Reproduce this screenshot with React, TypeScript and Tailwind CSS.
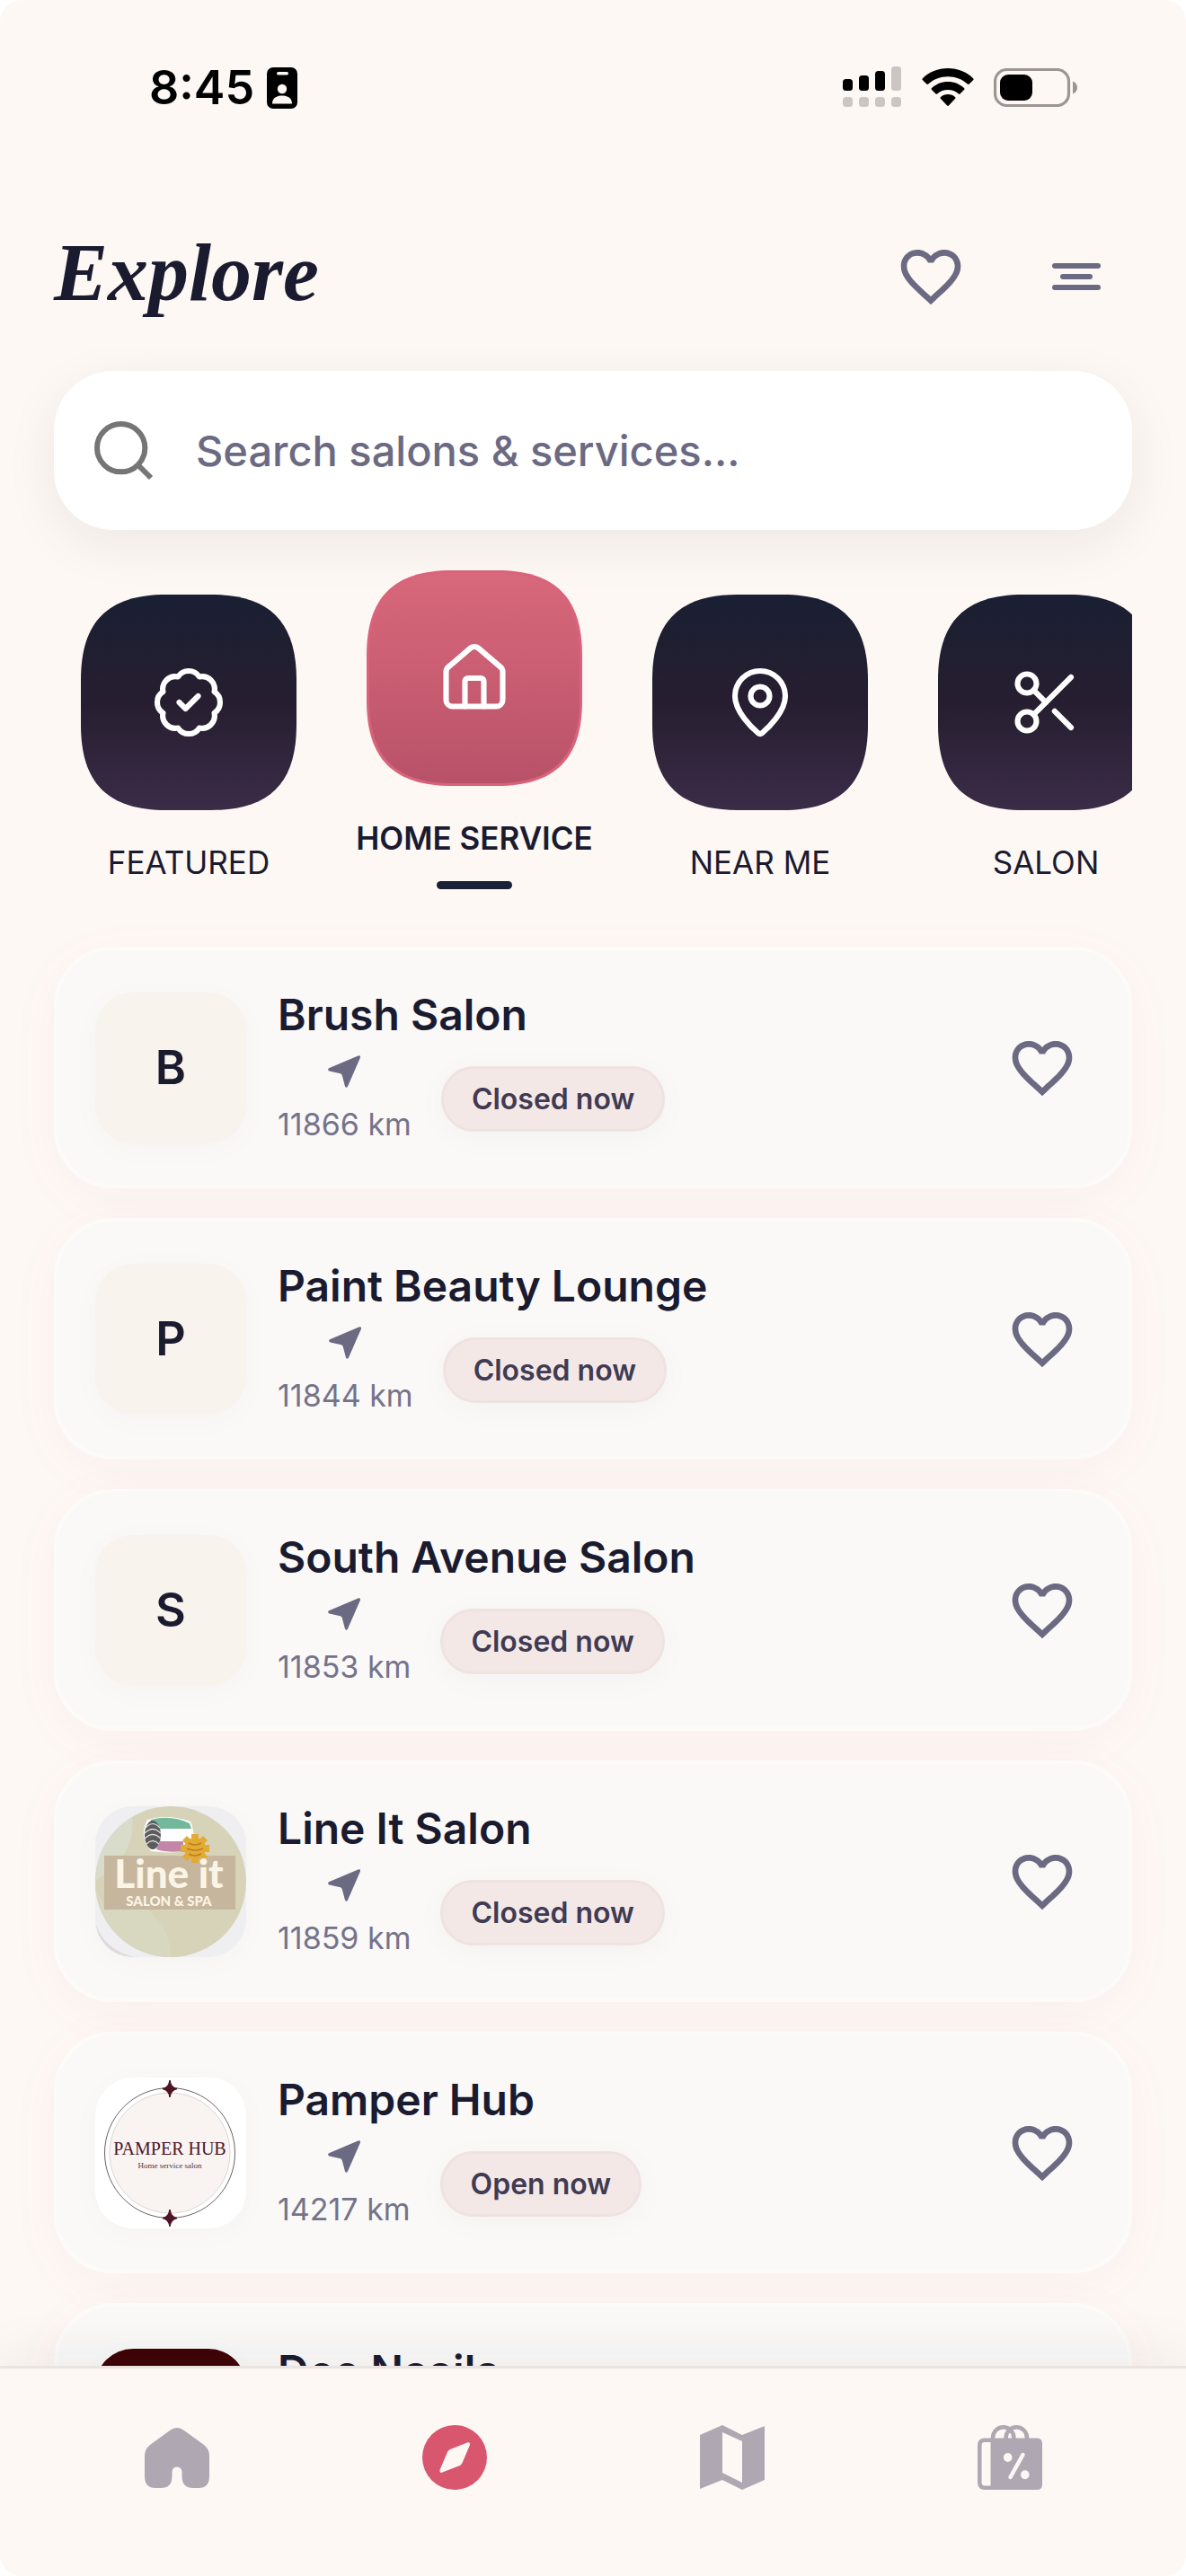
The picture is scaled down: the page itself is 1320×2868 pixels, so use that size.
import { useState } from "react";
import type { ComponentType, ReactNode } from "react";
import { BadgeCheck, House, MapPin, Scissors, Search } from "lucide-react";
import type { LucideProps } from "lucide-react";
import { MdFavoriteBorder } from "react-icons/md";

type Category = {
	id: string;
	label: string;
	icon: ComponentType<LucideProps>;
};

type Salon = {
	name: string;
	distance: string;
	isOpen: boolean;
	logo: ReactNode;
};

const categories: Category[] = [
	{ id: "featured", label: "FEATURED", icon: BadgeCheck },
	{ id: "home-service", label: "HOME SERVICE", icon: House },
	{ id: "near-me", label: "NEAR ME", icon: MapPin },
	{ id: "salon", label: "SALON", icon: Scissors },
];

const salons: Salon[] = [
	{ name: "Brush Salon", distance: "11866 km", isOpen: false, logo: <InitialLogo letter="B" /> },
	{ name: "Paint Beauty Lounge", distance: "11844 km", isOpen: false, logo: <InitialLogo letter="P" /> },
	{ name: "South Avenue Salon", distance: "11853 km", isOpen: false, logo: <InitialLogo letter="S" /> },
	{ name: "Line It Salon", distance: "11859 km", isOpen: false, logo: <LineItLogo /> },
	{ name: "Pamper Hub", distance: "14217 km", isOpen: true, logo: <PamperHubLogo /> },
	{ name: "Dee Naails", distance: "11860 km", isOpen: false, logo: <div className="size-full bg-[#3f0306]" /> },
];

export default function App() {
	const [selected, setSelected] = useState("home-service");

	return (
		<div className="h-screen bg-white">
			<div className="flex h-full flex-col overflow-hidden rounded-[24px] bg-[#fef8f4] font-[Inter,sans-serif] text-[#1b1b30]">
				<StatusBar />
				<header className="mt-24 flex h-40 shrink-0 items-center justify-between pr-[90px] pl-[60px]">
					<h1 className="pb-1 font-['Liberation_Serif',serif] text-[90px] leading-[100px] font-bold italic">Explore</h1>
					<div className="flex items-center gap-[90px] pt-1 text-[#6c6a82]">
						<button type="button" aria-label="Favourites">
							<MdFavoriteBorder className="size-20" />
						</button>
						<button type="button" aria-label="Menu" className="flex size-16 flex-col items-center justify-center gap-1.5">
							<span className="h-1.5 w-[54px] rounded-full bg-current" />
							<span className="h-1.5 w-9 rounded-full bg-current" />
							<span className="h-1.5 w-[54px] rounded-full bg-current" />
						</button>
					</div>
				</header>

				<main className="flex min-h-0 flex-1 flex-col overflow-hidden px-[60px] pt-[27px]">
					<label className="flex h-[177px] shrink-0 items-center rounded-[66px] bg-white pr-10 pl-[38px] shadow-[0_16px_60px_rgba(27,27,48,0.07)]">
						<Search className="size-20 shrink-0 text-[#757575]" strokeWidth={1.8} strokeLinecap="butt" />
						<input
							type="text"
							aria-label="Search salons and services"
							placeholder="Search salons & services..."
							className="ml-10 min-w-0 flex-1 bg-transparent text-[47px] leading-[60px] font-medium outline-none placeholder:text-[#6c6a82]"
						/>
					</label>

					<nav aria-label="Categories" className="flex shrink-0 gap-[18px] overflow-hidden pt-[45px] pb-16">
						{categories.map((category) => (
							<CategoryTile
								key={category.id}
								category={category}
								active={category.id === selected}
								onSelect={() => setSelected(category.id)}
							/>
						))}
					</nav>

					<ul className="flex flex-col gap-[33px]">
						{salons.map((salon) => (
							<SalonCard key={salon.name} salon={salon} />
						))}
					</ul>
				</main>

				<BottomNav />
			</div>
		</div>
	);
}

function StatusBar() {
	return (
		<div className="flex h-[130px] shrink-0 items-end justify-between pr-[120px] pb-1.5 pl-[166px] text-black">
			<div className="flex items-center gap-3.5">
				<span className="text-[52px] leading-[52px] font-semibold">8:45</span>
				<svg viewBox="0 0 34 46" className="h-[46px] w-[34px]">
					<rect width="34" height="46" rx="7" fill="#000" />
					<rect x="11" y="5" width="13" height="3.5" rx="1.7" fill="#fef8f4" />
					<circle cx="17" cy="24" r="5.2" fill="#fef8f4" />
					<path d="M6 40.5C6 34 11 31.5 17 31.5S28 34 28 40.5Z" fill="#fef8f4" />
				</svg>
			</div>
			<div className="flex items-center gap-[22px] pb-1">
				<svg viewBox="0 0 66 46" className="h-[46px] w-[66px]">
					<g fill="#000">
						<rect y="14" width="11" height="13" rx="3.5" />
						<rect x="18" y="10" width="11" height="17" rx="3.5" />
						<rect x="36" y="5" width="11" height="22" rx="3.5" />
					</g>
					<g fill="#cbc6c4">
						<rect x="54" width="11" height="27" rx="3.5" />
						<rect y="34" width="11" height="11" rx="3.5" />
						<rect x="18" y="34" width="11" height="11" rx="3.5" />
						<rect x="36" y="34" width="11" height="11" rx="3.5" />
						<rect x="54" y="34" width="11" height="11" rx="3.5" />
					</g>
				</svg>
				<svg viewBox="0 0 58 43" className="h-[43px] w-[58px]">
					<path d="M29 0C40 0 50 4 57.3 11.4Q58 12.3 57.3 13.1L52.5 17.7Q51.7 18.3 50.8 17.6C45 12.2 37.5 9.3 29 9.3S13 12.2 7.2 17.6Q6.3 18.3 5.5 17.7L.7 13.1Q0 12.3.7 11.4C8 4 18 0 29 0Z" />
					<path d="M29 15C36 15 42.4 17.6 47.2 22.2Q48 23 47.2 23.8L42.5 28.4Q41.7 29 40.9 28.4C37.5 25.5 33.5 24 29 24S20.5 25.5 17.1 28.4Q16.3 29 15.5 28.4L10.8 23.8Q10 23 10.8 22.2C15.6 17.6 22 15 29 15Z" />
					<path d="M29 29C32.2 29 35 30.2 37.2 32.2Q37.9 33 37.2 33.8L29.9 41.6Q29 42.4 28.1 41.6L20.8 33.8Q20.1 33 20.8 32.2C23 30.2 25.8 29 29 29Z" />
				</svg>
				<svg viewBox="0 0 94 43" className="h-[43px] w-[94px]">
					<rect x="1.5" y="1.5" width="82" height="40" rx="13" fill="none" stroke="#9b9593" strokeWidth="3.2" />
					<rect x="7" y="7" width="36" height="29" rx="9" />
					<path d="M88 14.5C91.5 16 93 18.5 93 21.5S91.5 27 88 28.5Z" fill="#9b9593" />
				</svg>
			</div>
		</div>
	);
}

function CategoryTile({ category, active, onSelect }: { category: Category; active: boolean; onSelect: () => void }) {
	const Icon = category.icon;
	const squircle = "M145 0C210 0 240 30 240 95V145C240 210 210 240 145 240H95C30 240 0 210 0 145V95C0 30 30 0 95 0Z";

	return (
		<button
			type="button"
			aria-pressed={active}
			onClick={onSelect}
			className={`flex w-[300px] shrink-0 flex-col items-center ${active ? "" : "pt-[27px]"}`}
		>
			<span className="relative flex size-60 items-center justify-center">
				<svg viewBox="0 0 240 240" className="absolute inset-0 size-full">
					<defs>
						<linearGradient id={`fill-${category.id}`} x1="0" y1="0" x2="0" y2="1">
							<stop offset="0" stopColor={active ? "#d8687b" : "#1a1f33"} />
							<stop offset={active ? "0.5" : "0.5"} stopColor={active ? "#c95d72" : "#261e30"} />
							<stop offset="1" stopColor={active ? "#b85269" : "#3b2c48"} />
						</linearGradient>
					</defs>
					{active && <path d={squircle} fill="#d9637a" />}
					<path
						d={squircle}
						fill={`url(#fill-${category.id})`}
						transform={active ? "translate(3 3) scale(.975)" : undefined}
					/>
				</svg>
				<Icon className="relative size-[84px] text-white" strokeWidth={1.75} />
			</span>
			<span className={`mt-9 text-[35px] leading-[44px] whitespace-nowrap ${active ? "font-semibold" : "font-normal"}`}>
				{category.label}
			</span>
			{active && <span className="mt-[26px] h-[9px] w-[84px] rounded-full bg-[#1a2035]" />}
		</button>
	);
}

function SalonCard({ salon }: { salon: Salon }) {
	return (
		<li className="flex h-[269px] shrink-0 items-center rounded-[66px] border-4 border-[#fdfbfa] bg-[#faf9f8] pr-14 pl-[42px] shadow-[0_12px_60px_rgba(150,50,70,0.04)]">
			<div className="size-[168px] shrink-0 overflow-hidden rounded-[42px] shadow-[0_6px_36px_rgba(27,27,48,0.025)]">{salon.logo}</div>
			<div className="ml-[35px] min-w-0 flex-1">
				<h2 className="truncate text-[48px] leading-[62px] font-semibold">{salon.name}</h2>
				<div className="mt-2 flex items-center gap-[33px]">
					<p className="flex flex-col items-center text-[34px] leading-[54px] text-[#75738a]">
						<span className="flex h-14 items-start pt-1.5">
							<svg viewBox="0 0 36 36" className="size-9" fill="#6c6a82">
								<path d="M33.5.5Q36.5-.5 36 2.5L22 34.5Q20.5 37 19 34.5L15.8 22.5Q15.4 20.8 13.8 20.3L1.5 17.5Q-1 16 1 14.3Z" />
							</svg>
						</span>
						{salon.distance}
					</p>
					<span className="flex h-[73px] items-center rounded-full border-3 border-[#efe3e2] bg-[#f4e8e7] px-[31px] text-[32px] leading-10 font-semibold text-[#403b52] shadow-[0_6px_36px_rgba(27,27,48,0.03)]">
						{salon.isOpen ? "Open now" : "Closed now"}
					</span>
				</div>
			</div>
			<button type="button" aria-label={`Save ${salon.name}`} className="text-[#6c6a82]">
				<MdFavoriteBorder className="size-20" />
			</button>
		</li>
	);
}

function InitialLogo({ letter }: { letter: string }) {
	return (
		<div className="flex size-full items-center justify-center bg-[#f8f3ec] text-[52px] leading-[60px] font-semibold">{letter}</div>
	);
}

function LineItLogo() {
	return (
		<svg viewBox="0 0 168 168" className="size-full" role="img" aria-label="Line It Salon logo">
			<rect width="168" height="168" fill="#efeef0" />
			<path d="M0 130Q10 160 44 168H0Z" fill="#dddbdb" />
			<circle cx="84" cy="84" r="84" fill="#d6d3b8" />
			<path d="M41 12Q46 50 10 76L0 84A84 84 0 0 1 41 12Z" fill="#d9dbcb" />
			<path d="M0 90L11 114H56Q84 134 84 168A84 84 0 0 1 0 90Z" fill="#d8d7c0" />
			<path d="M58 15Q80 8 106 17Q112 30 108 47Q90 54 62 50Q48 34 58 15Z" fill="#fff" />
			<path d="M62 15Q84 9 105 19L107 25H72Q70 18 62 17Z" fill="#74b89b" />
			<ellipse cx="64" cy="32" rx="9" ry="16" fill="#5c5c5f" />
			<path d="M56 24q8-9 16 0M55 30q9-9 18 0M55 36q9-9 18 0M57 42q7-7 14 0" fill="none" stroke="#d9d9d9" strokeWidth="1.2" />
			<path d="M72 39H98V50Q80 52 68 48Z" fill="#c486a8" />
			<rect x="10" y="55" width="146" height="60" fill="#c6b69e" />
			<g fill="#e3aa34">
				<circle cx="111" cy="47" r="12" />
				<path d="M107 31h8v32h-8zM95 43h32v8H95zM97 38l5-5L125 56l-5 5zM120 33l5 5L102 61l-5-5z" />
			</g>
			<path d="M104 41q7 4 14 0M102 47q9 4 18 0M104 53q7 4 14 0" fill="none" stroke="#b97f1d" strokeWidth="1.5" />
			<text x="82" y="91" textAnchor="middle" fontFamily="Lato" fontWeight="900" fontSize="44" fill="#fbf5e6">Line it</text>
			<text x="82" y="111" textAnchor="middle" fontFamily="Lato" fontWeight="900" fontSize="15" fill="#fbf5e6">SALON &amp; SPA</text>
		</svg>
	);
}

function PamperHubLogo() {
	return (
		<svg viewBox="0 0 168 168" className="size-full" role="img" aria-label="Pamper Hub logo">
			<rect width="168" height="168" fill="#fff" />
			<circle cx="83" cy="84" r="72.5" fill="none" stroke="#6b6266" strokeWidth="1" />
			<circle cx="83" cy="84" r="67" fill="#f9f4f2" stroke="#cfc6c4" strokeWidth=".7" />
			<path d="M83 3Q84 11.5 91 12.5Q84 13.5 83 22Q82 13.5 75 12.5Q82 11.5 83 3Z" fill="#4d1525" stroke="#4d1525" strokeWidth="1.5" />
			<path d="M83 147Q84 155.5 91 156.5Q84 157.5 83 166Q82 157.5 75 156.5Q82 155.5 83 147Z" fill="#4d1525" stroke="#4d1525" strokeWidth="1.5" />
			<text x="83" y="86" textAnchor="middle" fontFamily="Liberation Serif" fontSize="20" fill="#4d1525">PAMPER HUB</text>
			<text x="83" y="101" textAnchor="middle" fontFamily="Liberation Serif" fontSize="9" fill="#4b3a3e">Home service salon</text>
		</svg>
	);
}

function BottomNav() {
	return (
		<nav aria-label="Main" className="relative grid h-[234px] shrink-0 grid-cols-4 border-t-3 border-[#e9e3e1] bg-[#fef8f4] px-[42px] pt-[63px] text-[#afa7b1] shadow-[0_-12px_60px_rgba(27,27,48,0.06)]">
			<a href="#home" aria-label="Home" className="flex items-start justify-center">
				<svg viewBox="0 0 72 72" className="size-[72px]" fill="currentColor">
					<path d="M28 6Q36 0 44 6L66 22Q72 27 72 34V57Q72 70 60 70H54Q41.5 70 41.5 57V52A5.5 5.5 0 0 0 30.5 52V57Q30.5 70 18 70H12Q0 70 0 57V34Q0 27 6 22Z" />
				</svg>
			</a>
			<a href="#explore" aria-label="Explore" aria-current="page" className="flex items-start justify-center text-[#d8566e]">
				<svg viewBox="0 0 72 72" className="size-[72px]">
					<circle cx="36" cy="36" r="36" fill="currentColor" />
					<path d="M50 19.5L31 27Q29 28 28 30L19.5 50Q19 54 22.5 52.5L42 45Q43.5 44 44.5 42L53 22Q53.5 18.3 50 19.5Z" fill="#fef8f4" />
				</svg>
			</a>
			<a href="#map" aria-label="Map" className="flex items-start justify-center">
				<svg viewBox="0 0 72 72" className="size-[72px]" fill="currentColor" fillRule="evenodd">
					<path d="M0 11L25 0L47 11L72 1V61L47 72L25 61L0 71ZM25 8V53L47 64V18Z" />
				</svg>
			</a>
			<a href="#offers" aria-label="Offers" className="flex items-start justify-center">
				<svg viewBox="0 0 72 72" className="size-[72px]" fill="none" stroke="currentColor" strokeWidth="4.5">
					<path d="M17 16.8H8Q2.3 16.8 2.3 22.5V64Q2.3 69.7 8 69.7H17" />
					<path d="M14.5 14.5H66Q72 14.5 72 20.5V66Q72 72 66 72H14.5Z" fill="currentColor" stroke="none" />
					<path d="M17 16V14A11.7 11.7 0 0 1 40.4 14V16M31.6 16V14A11.7 11.7 0 0 1 55 14V16" />
					<path d="M50.5 33L36.5 58" stroke="#fef8f4" strokeLinecap="round" />
					<ellipse cx="33.7" cy="36" rx="4.8" ry="5" fill="#fef8f4" stroke="none" />
					<ellipse cx="52.8" cy="55.3" rx="4.8" ry="5" fill="#fef8f4" stroke="none" />
				</svg>
			</a>
		</nav>
	);
}
